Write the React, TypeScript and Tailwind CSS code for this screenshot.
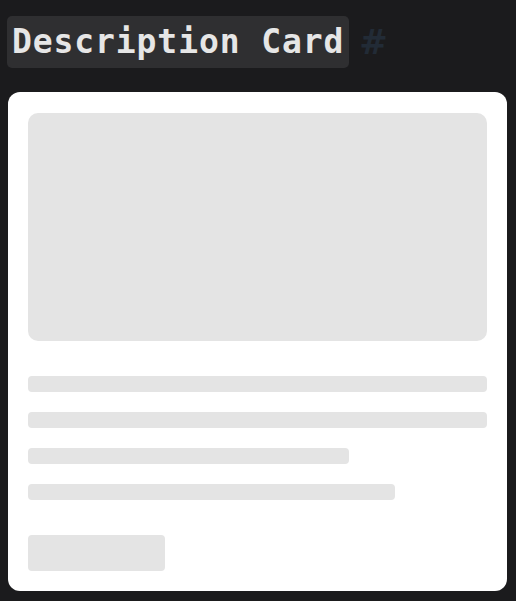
const lines = ["w-full", "w-full", "w-[70%]", "w-[80%]"];

const App: React.FC = () => {
  return (
    <div className="min-h-screen bg-[#1b1b1d] px-2 pt-4 pb-2">
      <h1 className="flex items-center -ml-px">
        <code className="flex h-[52px] items-center rounded-[5px] bg-[#2f2f31] px-[5px] font-['DejaVu_Sans_Mono',monospace] text-[33px] font-bold tracking-[0.9px] text-[#e6e6e6]">
          Description Card
        </code>
        <span className="ml-[10px] font-['DejaVu_Sans',sans-serif] text-[34px] font-bold text-[#222b36]">
          #
        </span>
      </h1>

      <div className="mt-6 w-[499px] rounded-xl bg-white px-5 pt-[21px] pb-5">
        <div className="h-[228px] rounded-[10px] bg-[#e4e4e4]" />
        <div className="mt-[35px] flex flex-col gap-5">
          {lines.map((w, i) => (
            <div key={i} className={`h-4 rounded bg-[#e4e4e4] ${w}`} />
          ))}
        </div>
        <div className="mt-[35px] h-9 w-[137px] rounded bg-[#e4e4e4]" />
      </div>
    </div>
  );
};

export default App;
